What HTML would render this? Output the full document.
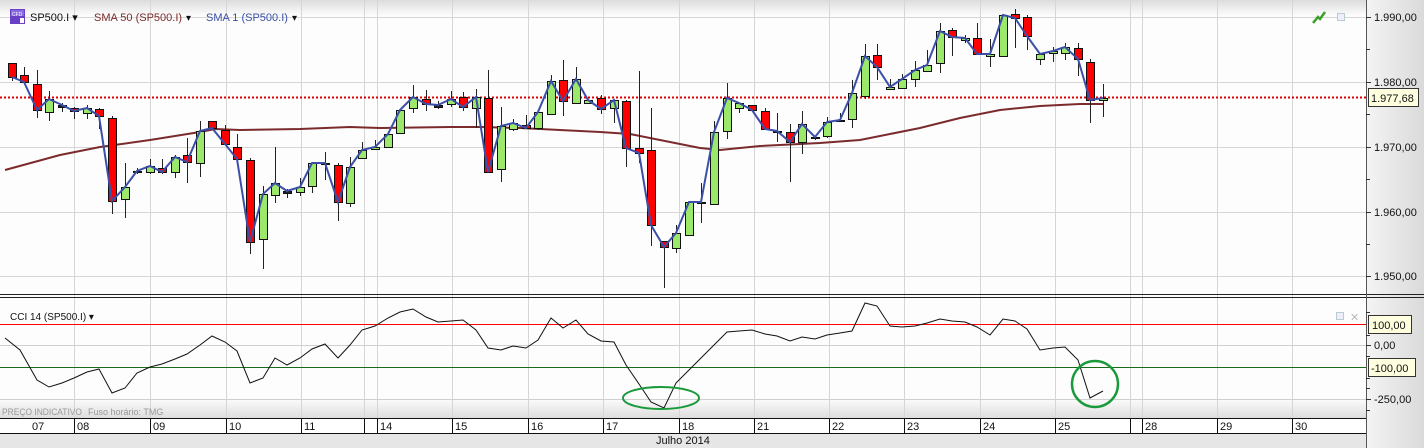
<!DOCTYPE html>
<html><head><meta charset="utf-8"><style>
html,body{margin:0;padding:0;width:1424px;height:448px;overflow:hidden;background:#fff;font-family:"Liberation Sans",sans-serif}
svg text{font-family:"Liberation Sans",sans-serif}
</style></head><body>
<svg id="s" width="1424" height="448" xmlns="http://www.w3.org/2000/svg">
<defs>
<linearGradient id="top" x1="0" y1="0" x2="0" y2="1"><stop offset="0" stop-color="#dcdcdc"/><stop offset="1" stop-color="#fdfdfd"/></linearGradient>
<linearGradient id="bot" x1="0" y1="0" x2="0" y2="1"><stop offset="0" stop-color="#fdfdfd"/><stop offset="1" stop-color="#dedede"/></linearGradient>
<linearGradient id="ax" x1="0" y1="0" x2="1" y2="0"><stop offset="0" stop-color="#f4f4f4"/><stop offset="1" stop-color="#dadada"/></linearGradient>
</defs>
<rect x="0" y="0" width="1424" height="448" fill="#fdfdfd"/>
<rect x="0" y="0" width="1366" height="16" fill="url(#top)"/>
<rect x="1366" y="0" width="58" height="448" fill="url(#ax)"/>
<rect x="0" y="398" width="1366" height="20" fill="url(#bot)"/>
<g id="g"></g>
</svg>
<script>
var S='';
var vx=[74,150,226,301,364,377,452,528,603,679,754,829,904,980,1055,1130,1142,1217,1292];
vx.forEach(function(x){S+='<line x1="'+(x+.5)+'" y1="0" x2="'+(x+.5)+'" y2="418" stroke="#d6d6d6"/>';});
[17,82,147,212,276].forEach(function(y){S+='<line x1="0" y1="'+(y+.5)+'" x2="1366" y2="'+(y+.5)+'" stroke="#d6d6d6"/>';});
[345,399].forEach(function(y){S+='<line x1="0" y1="'+(y+.5)+'" x2="1366" y2="'+(y+.5)+'" stroke="#d0d0d0"/>';});
S+='<line x1="0" y1="324.5" x2="1366" y2="324.5" stroke="#f00"/>';
S+='<line x1="0" y1="367.5" x2="1366" y2="367.5" stroke="#1a6a1a"/>';
S+='<line x1="0" y1="97.5" x2="1366" y2="97.5" stroke="#e00000" stroke-width="2" stroke-dasharray="2,2"/>';
var sm=[[5,170],[60,155],[100,147],[150,140],[200,132],[215,129],[240,130],[300,129],[350,127],[380,128],[450,127],[480,127],[520,128],[600,132],[630,134],[660,140],[700,148],[720,150],[760,146],[820,143],[860,140],[880,136],[920,128],[960,118],[1000,110],[1040,106],[1080,104],[1103,104]];
S+='<polyline fill="none" stroke="#7b2b2b" stroke-width="2" points="'+sm.map(function(p){return p.join(',')}).join(' ')+'"/>';
var c=[[12,63,77,63,81,'r'],[24,75,82,67,83,'r'],[37,84,110,70,118,'r'],[49,99,112,91,121,'g'],[62,105,107,103,112,'d'],[74,108,111,107,119,'r'],[87,108,113,105,119,'g'],[99,109,116,108,129,'r'],[112,118,201,116,214,'r'],[125,187,199,163,218,'g'],[137,171,172,168,174,'d'],[150,166,172,159,174,'g'],[162,168,172,159,174,'r'],[175,157,172,155,178,'g'],[187,155,162,138,183,'r'],[200,131,163,121,177,'g'],[212,121,128,121,129,'r'],[225,130,144,125,144,'r'],[237,147,159,134,159,'r'],[250,160,242,158,254,'r'],[263,194,239,186,269,'g'],[275,183,195,147,203,'g'],[287,191,193,189,198,'d'],[300,187,192,178,196,'g'],[312,163,186,163,193,'g'],[325,163,164,152,180,'d'],[338,165,202,163,221,'r'],[350,167,203,157,207,'g'],[362,150,158,142,158,'g'],[375,147,149,140,150,'g'],[388,134,147,134,148,'g'],[400,110,133,110,133,'g'],[413,97,108,85,113,'g'],[426,99,104,90,111,'r'],[438,105,107,101,109,'d'],[451,99,104,91,107,'g'],[463,97,107,92,111,'r'],[476,97,108,89,128,'g'],[488,98,172,70,172,'r'],[501,126,169,107,182,'g'],[513,123,129,119,131,'g'],[526,125,128,115,129,'r'],[538,112,128,112,130,'g'],[551,81,114,75,114,'g'],[563,80,101,60,116,'r'],[576,79,103,67,104,'g'],[588,100,103,100,104,'g'],[601,98,109,95,114,'r'],[614,100,108,100,123,'g'],[626,101,148,100,167,'r'],[639,148,153,71,163,'r'],[651,150,225,108,246,'r'],[664,241,247,241,288,'r'],[676,233,248,225,253,'g'],[689,202,235,202,235,'g'],[701,202,203,183,223,'d'],[714,132,204,121,204,'g'],[727,98,131,83,139,'g'],[739,103,108,103,113,'g'],[752,105,110,105,110,'r'],[765,111,129,108,129,'r'],[777,131,132,113,142,'d'],[790,132,142,124,182,'r'],[802,124,142,111,154,'g'],[815,137,138,136,140,'d'],[827,122,136,117,138,'g'],[840,120,121,113,122,'d'],[852,93,119,80,128,'g'],[865,56,96,44,99,'g'],[877,55,67,44,80,'r'],[890,87,89,79,89,'g'],[902,79,88,74,88,'g'],[915,70,79,61,87,'g'],[927,65,71,50,71,'g'],[940,31,63,23,73,'g'],[952,30,37,28,56,'r'],[965,38,40,35,43,'g'],[977,38,54,23,54,'r'],[990,54,56,39,67,'g'],[1003,15,56,15,56,'g'],[1015,14,18,9,48,'r'],[1027,17,36,15,50,'r'],[1040,54,59,54,65,'g'],[1053,51,53,47,62,'g'],[1065,47,53,43,60,'g'],[1078,48,59,43,76,'r'],[1090,62,100,59,123,'r'],[1103,98,100,84,117,'g']];
var cl=[];
c.forEach(function(k){var x=k[0];
S+='<line x1="'+(x+.5)+'" y1="'+k[3]+'" x2="'+(x+.5)+'" y2="'+k[4]+'" stroke="#222"/>';
var h=Math.max(k[2]-k[1],1);var f=k[5]=='r'?'#f00':(k[5]=='g'?'#9be86a':'#222');
S+='<rect x="'+(x-3.5)+'" y="'+(k[1]+.5)+'" width="8" height="'+h+'" fill="'+f+'" stroke="#111"/>';
cl.push(x+','+(k[5]=='r'?k[2]:k[1]));});
S+='<polyline fill="none" stroke="#3b4fa8" stroke-width="2" points="'+cl.join(' ')+'"/>';
var cc=[[5,338],[20,350],[37,380],[49,387],[62,383],[74,378],[87,372],[99,369],[112,393],[125,388],[137,373],[150,367],[162,364],[175,359],[187,354],[200,345],[212,336],[225,342],[237,351],[250,383],[263,378],[275,358],[287,365],[300,358],[312,349],[325,344],[338,358],[350,345],[362,330],[375,326],[388,318],[400,312],[413,309],[426,317],[438,322],[451,321],[463,320],[476,330],[488,348],[501,350],[513,346],[526,348],[538,340],[551,318],[563,328],[576,320],[588,334],[601,341],[614,342],[626,365],[639,384],[651,402],[664,408],[676,383],[689,370],[701,358],[714,345],[727,332],[739,331],[752,330],[765,334],[777,336],[790,341],[802,337],[815,339],[827,335],[840,333],[852,331],[865,303],[877,306],[890,326],[902,327],[915,326],[927,323],[940,319],[952,321],[965,322],[977,327],[990,335],[1003,319],[1015,321],[1027,329],[1040,350],[1053,348],[1065,347],[1078,360],[1090,398],[1103,391]];
S+='<polyline fill="none" stroke="#111" stroke-width="1" points="'+cc.map(function(p){return p.join(',')}).join(' ')+'"/>';
S+='<ellipse cx="661" cy="398" rx="38" ry="11" fill="none" stroke="#1a9a3a" stroke-width="2"/>';
S+='<circle cx="1095" cy="384" r="23" fill="none" stroke="#1a9a3a" stroke-width="2.5"/>';
S+='<rect x="0" y="294" width="1424" height="1" fill="#222"/><rect x="0" y="297" width="1424" height="1" fill="#222"/>';
S+='<line x1="1366.5" y1="0" x2="1366.5" y2="448" stroke="#555"/>';
[[17,'1.990,00'],[82,'1.980,00'],[147,'1.970,00'],[212,'1.960,00'],[276,'1.950,00']].forEach(function(p){S+='<line x1="1366" y1="'+(p[0]+.5)+'" x2="1371" y2="'+(p[0]+.5)+'" stroke="#333"/><text x="1374" y="'+(p[0]+4)+'" font-size="11" fill="#111">'+p[1]+'</text>';});
[49,114,179,244].forEach(function(y){S+='<line x1="1366" y1="'+(y+.5)+'" x2="1370" y2="'+(y+.5)+'" stroke="#333"/>';});
S+='<rect x="1368.5" y="88.5" width="50" height="18" fill="#ffffe0" stroke="#333"/><text x="1371" y="102" font-size="11" fill="#111">1.977,68</text>';
[312,335,356,378,388,410].forEach(function(y){S+='<line x1="1366" y1="'+(y+.5)+'" x2="1370" y2="'+(y+.5)+'" stroke="#333"/>';});
S+='<rect x="1368.5" y="315.5" width="43" height="18" fill="#ffffe0" stroke="#333"/><text x="1372" y="329" font-size="11" fill="#111">100,00</text>';
S+='<line x1="1366" y1="345.5" x2="1371" y2="345.5" stroke="#333"/><text x="1374" y="349" font-size="11" fill="#111">0,00</text>';
S+='<rect x="1368.5" y="358.5" width="47" height="18" fill="#ffffe0" stroke="#333"/><text x="1371" y="372" font-size="11" fill="#111">-100,00</text>';
S+='<line x1="1366" y1="399.5" x2="1371" y2="399.5" stroke="#333"/><text x="1374" y="403" font-size="11" fill="#111">-250,00</text>';
S+='<rect x="10" y="9" width="15" height="15" fill="#6a3fc8"/><rect x="11" y="10" width="13" height="6" fill="#8a6ae0"/><text x="12" y="16" font-size="5" fill="#fff">CFD</text><rect x="20" y="18" width="4" height="5" fill="#fff"/>';
S+='<text x="30" y="21" font-size="11" fill="#111">SP500.I ▾</text>';
S+='<text x="94" y="21" font-size="11" fill="#7b2b2b">SMA 50 (SP500.I)</text><text x="186" y="21" font-size="10" fill="#111">▾</text>';
S+='<text x="206" y="21" font-size="11" fill="#3b4fa8">SMA 1 (SP500.I)</text><text x="292" y="21" font-size="10" fill="#111">▾</text>';
S+='<path d="M1313 23 L1318 17 L1320 19 L1325 12" fill="none" stroke="#3aa02a" stroke-width="2.5"/>';
S+='<rect x="1337.5" y="13.5" width="7" height="7" fill="#eef" stroke="#bcc"/>';
S+='<text x="10" y="320" font-size="10" fill="#111">CCI 14 (SP500.I) ▾</text>';
S+='<rect x="1336.5" y="312.5" width="7" height="7" fill="#eef" stroke="#bcc"/><text x="1350" y="321" font-size="11" fill="#bbb">✕</text>';
S+='<text x="2" y="415" font-size="9" fill="#999" textLength="80" lengthAdjust="spacingAndGlyphs">PREÇO INDICATIVO</text><text x="88" y="415" font-size="9" fill="#999">Fuso horário: TMG</text>';
S+='<rect x="0" y="418" width="1366" height="15" fill="#fff"/><rect x="0" y="433" width="1366" height="15" fill="#e6e6e6"/>';
S+='<line x1="0" y1="418.5" x2="1366" y2="418.5" stroke="#111"/><line x1="0" y1="433.5" x2="1366" y2="433.5" stroke="#111"/>';
var lb=['08','09','10','11','','14','15','16','17','18','21','22','23','24','25','','28','29','30'];
vx.forEach(function(x,i){S+='<line x1="'+(x+.5)+'" y1="418" x2="'+(x+.5)+'" y2="433" stroke="#111"/>';if(lb[i])S+='<text x="'+(x+3)+'" y="430" font-size="11" fill="#111">'+lb[i]+'</text>';});
S+='<text x="32" y="430" font-size="11" fill="#111">07</text>';
S+='<text x="656" y="444" font-size="11" fill="#111">Julho 2014</text>';
document.getElementById('g').innerHTML=S;
</script>
</body></html>
